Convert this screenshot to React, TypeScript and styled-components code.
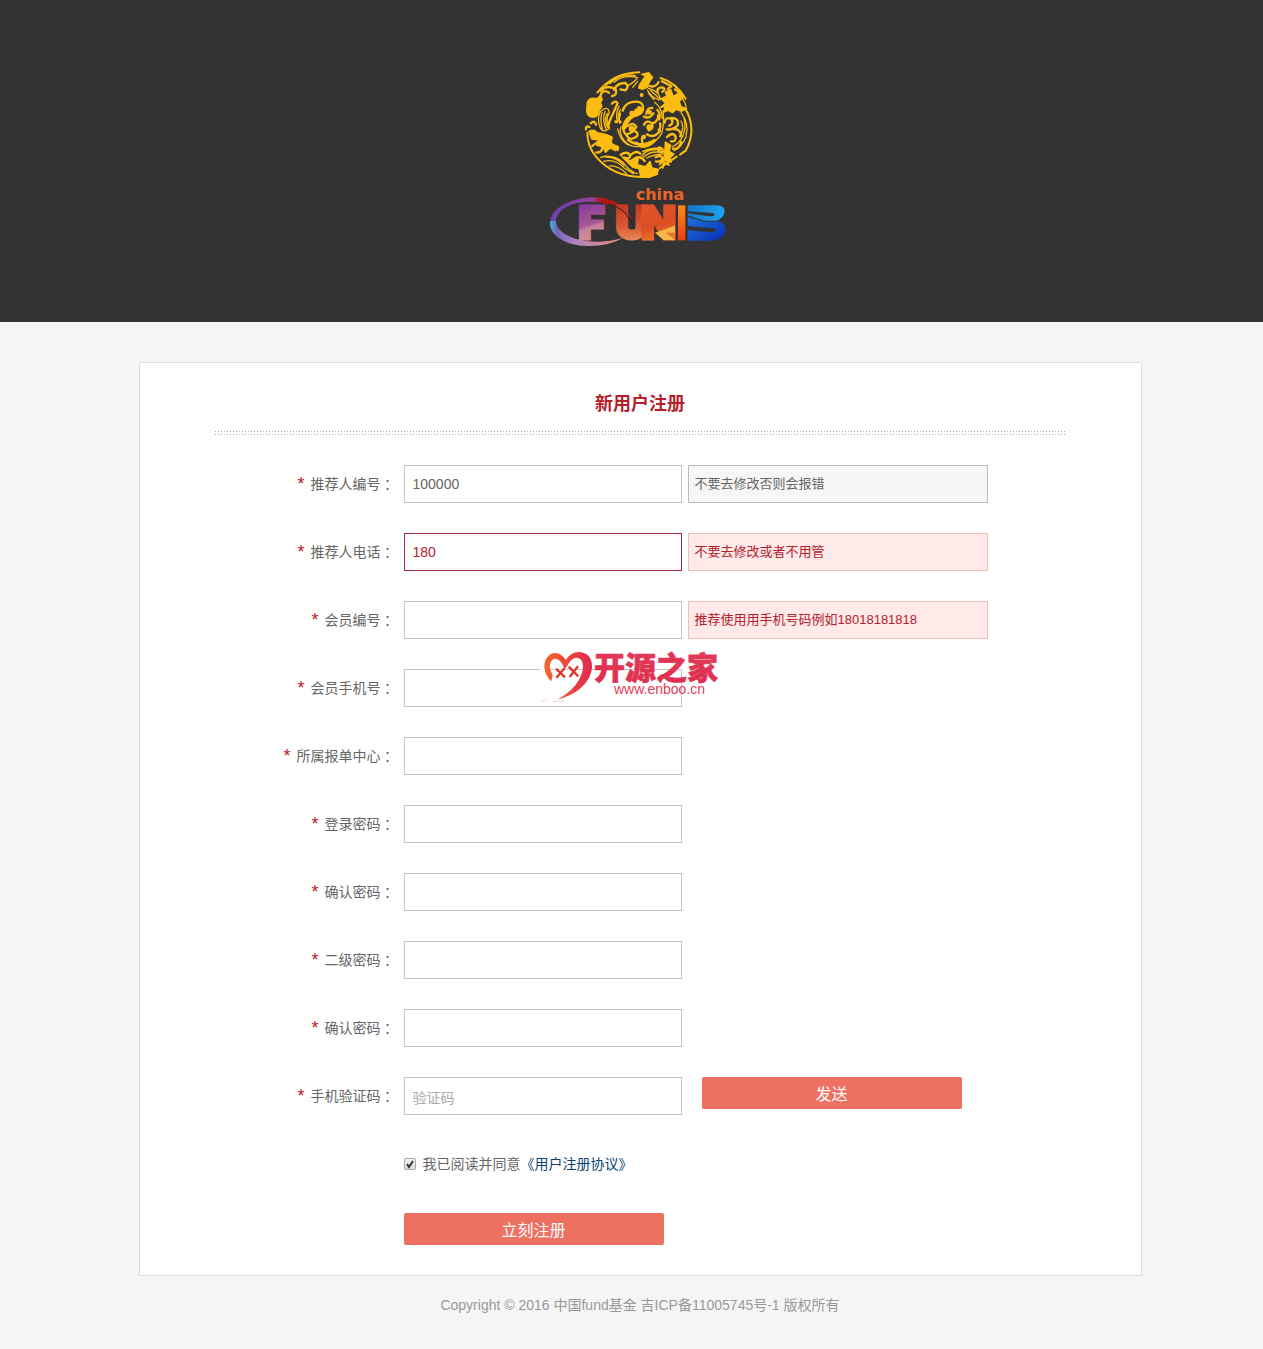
import React, { useState } from "react";
import styled, { createGlobalStyle, css } from "styled-components";

const GlobalStyle = createGlobalStyle`
  *, *::before, *::after { box-sizing: border-box; }
  body {
    margin: 0;
    background: #f5f5f5;
    color: #666;
    font: 14px/20px "Liberation Sans", "Noto Sans CJK SC", sans-serif;
  }
  input, button { font-family: inherit; }
`;

const Header = styled.header`
  display: flex;
  justify-content: center;
  height: 322px;
  padding: 60px 0 0 17px;
  background: #333;
`;

const Page = styled.div`
  padding: 40px 0 34px 17px;
`;

const Card = styled.main`
  position: relative;
  max-width: 1003px;
  margin: 0 auto;
  padding: 31px 75px 30px;
  background: #fff;
  border: 1px solid #ddd;
`;

const Title = styled.h1`
  margin: 0;
  font-size: 18px;
  line-height: 20px;
  font-weight: 700;
  text-align: center;
  color: #b5202a;
`;

const Divider = styled.hr`
  height: 4px;
  margin: 17px 0 30px;
  border: 0;
  background: conic-gradient(from 270deg at 1px 1px, #aaa 90deg, transparent 0) 0 0 / 3px 3px;
`;

const Form = styled.form`
  display: flex;
  flex-direction: column;
  gap: 30px;
`;

const Row = styled.div`
  display: grid;
  grid-template-columns: 180px 278px auto;
  grid-auto-rows: 38px;
  column-gap: 9px;
`;

const Label = styled.label`
  display: flex;
  align-items: center;
  justify-content: flex-end;
  line-height: 20px;
  white-space: nowrap;
`;

const Star = styled.span`
  margin-right: 6px;
  font-size: 18px;
  color: #b5202a;
`;

const Colon = styled.span`
  font-family: "Noto Sans CJK TC", sans-serif;
`;

const Input = styled.input<{ $error?: boolean }>`
  width: 278px;
  height: 38px;
  padding: 0 8px;
  border: 1px solid #c4c4c4;
  border-radius: 0;
  outline: 0;
  background: #fff;
  font-size: 14px;
  color: #666;
  &::placeholder { color: #a9a9a9; }
  &:placeholder-shown[placeholder] { padding-top: 4px; }
  ${(p) => p.$error && css`
    border-color: #a82c40;
    color: #b5202a;
  `}
`;

const Hint = styled.p<{ $error?: boolean }>`
  width: 300px;
  height: 38px;
  margin: 0 0 0 -3px;
  padding: 0 6px;
  border: 1px solid #bbb;
  background: #f6f6f6;
  font-size: 13px;
  line-height: 36px;
  ${(p) => p.$error && css`
    border-color: #f5bcbf;
    background: #ffe9e9;
    color: #b5202a;
  `}
`;

const Button = styled.button`
  width: 260px;
  height: 32px;
  padding: 4px 0 0;
  border: 0;
  border-radius: 2px;
  background: #ed7061;
  color: #fff;
  font-size: 16px;
  line-height: 20px;
  cursor: pointer;
`;

const SendButton = styled(Button)`
  margin-left: 11px;
`;

const Offset = styled.div`
  display: flex;
  align-items: center;
  min-height: 38px;
  padding-left: 189px;
`;

const SubmitRow = styled.div`
  display: flex;
  padding-left: 189px;
`;

const Agree = styled.label`
  display: flex;
  align-items: center;
`;

const TickWrap = styled.span`
  position: relative;
  display: flex;
  margin-right: 7px;
`;

const Tick = styled.input`
  appearance: none;
  width: 12px;
  height: 12px;
  margin: 0;
  border: 1px solid #aaa;
  border-radius: 2px;
  background: linear-gradient(#f2f2f2, #ddd);
  & + svg { display: none; }
  &:checked + svg { display: block; }
`;

const TickMark = styled.svg`
  position: absolute;
  inset: 0;
  pointer-events: none;
`;

const Link = styled.a`
  color: #0a4170;
  text-decoration: none;
`;

const Footer = styled.footer`
  padding-top: 19px;
  text-align: center;
  color: #999;
`;

const Watermark = styled.div`
  position: absolute;
  left: 390px;
  top: 277px;
  pointer-events: none;
  svg { display: block; }
`;

const Logo = () => (
  <svg width="200" height="195" viewBox="0 0 600 585" role="img" aria-label="china fund">
    <defs>
      <linearGradient id="ring" x1="0" x2="1">
        <stop offset="0" stopColor="#6a3fb0" />
        <stop offset=".5" stopColor="#93429c" />
        <stop offset=".62" stopColor="#b01418" />
        <stop offset="1" stopColor="#b01c18" />
      </linearGradient>
      <linearGradient id="ringLow" x1="0" x2="1">
        <stop offset="0" stopColor="#35b5dc" />
        <stop offset=".1" stopColor="#7a62bd" />
        <stop offset=".35" stopColor="#b384bd" />
        <stop offset="1" stopColor="#e58b78" />
      </linearGradient>
      <linearGradient id="f" gradientUnits="userSpaceOnUse" x1="130" y1="76" x2="165" y2="182">
        <stop offset="0" stopColor="#8b3c9c" />
        <stop offset=".55" stopColor="#aa5796" />
        <stop offset=".62" stopColor="#c4809f" />
        <stop offset="1" stopColor="#d8938f" />
      </linearGradient>
      <linearGradient id="u" gradientUnits="userSpaceOnUse" x1="0" y1="76" x2="0" y2="182">
        <stop offset="0" stopColor="#c53a22" />
        <stop offset=".6" stopColor="#da5933" />
        <stop offset="1" stopColor="#e98a5a" />
      </linearGradient>
      <linearGradient id="n" gradientUnits="userSpaceOnUse" x1="320" y1="76" x2="350" y2="182">
        <stop offset="0" stopColor="#e3542c" />
        <stop offset=".6" stopColor="#dd4c23" />
        <stop offset="1" stopColor="#ec7a2c" />
      </linearGradient>
      <linearGradient id="bar" x1="0" y1="0" x2="0" y2="1">
        <stop offset="0" stopColor="#f98a17" />
        <stop offset="1" stopColor="#f13d14" />
      </linearGradient>
      <linearGradient id="b1" x1="0" y1="0" x2="1" y2="0">
        <stop offset="0" stopColor="#1376c8" />
        <stop offset="1" stopColor="#1ea2ee" />
      </linearGradient>
      <linearGradient id="b2" x1="0" y1="0" x2="1" y2="1">
        <stop offset="0" stopColor="#1b74da" />
        <stop offset="1" stopColor="#0b2cb4" />
      </linearGradient>
    </defs>

    <g transform="translate(90 0)" fill="none" stroke="#fcbd10" strokeLinecap="round" strokeLinejoin="round">
      <g strokeWidth="6">
        <path d="M82 98Q130 38 208 37M272 54Q318 68 347 116M346 146Q382 208 347 272L330 284M52 218Q52 258 78 290Q128 350 214 351L262 342M270 324L320 290" />
      </g>
      <g fill="#fcbd10" strokeWidth="4">
        <path d="M52 126Q60 110 80 116L92 106L97 119L91 128L96 139Q86 150 84 162Q80 174 64 171Q50 168 50 150Z" />
        <path d="M208 75L226 48L215 43L236 38L248 52L238 66L232 82L217 88L206 84Z" />
        <path d="M274 116L290 108L286 96L302 88L310 110L330 96L340 112L328 124L333 140L350 145L334 154L318 148L308 158L294 151L280 157L286 140L272 142L286 130Z" />
        <path d="M57 214Q72 206 82 218L108 223L126 232L124 250L146 262L136 272L120 264L107 277L98 260L80 256L86 240L65 237Z" />
        <path d="M156 290L180 302L205 294L202 314L226 320L240 304L246 324L266 328L258 344L238 352L212 351L207 326L188 322Z" />
        <path d="M286 246L302 256L298 274L312 282L300 294L304 306L284 302L268 314L284 286Z" />
        <path d="M158 200Q166 168 196 160L205 140Q216 140 216 152Q212 168 192 170Q174 180 170 200L160 212Z" />
        <path d="M196 246Q224 262 256 240Q244 262 214 262Z" />
        <circle cx="215" cy="105" r="4" /><circle cx="138" cy="185" r="3" />
        <circle cx="186" cy="160" r="6" /><circle cx="185" cy="206" r="7" />
        <circle cx="238" cy="202" r="7" /><circle cx="221" cy="231" r="5" />
        <circle cx="239" cy="157" r="5" />
      </g>
      <g strokeWidth="7">
        <path d="M158 152Q166 124 202 125Q222 128 219 148Q216 164 200 163Q190 157 198 149M200 163Q170 170 161 198Q158 214 168 224Q190 218 199 200Q188 184 174 198M170 226Q179 246 202 228Q205 216 194 214M229 162Q232 142 247 144M250 160Q238 178 222 170M222 194Q230 178 246 190Q252 208 236 211M247 191Q268 181 264 166M231 223Q250 237 270 213M174 240Q210 266 254 240M220 257Q210 231 223 228" />
        <path d="M91 92Q111 72 137 88Q143 106 126 108M132 89Q142 68 166 69Q179 80 166 91L151 88M117 98Q97 86 92 106" />
        <path d="M238 78Q256 84 266 66M263 98Q258 82 277 82Q290 87 277 95M276 64L304 79L294 86M315 88L326 96" />
        <path d="M284 188Q286 169 304 177Q313 190 298 197M304 174Q328 174 323 196Q310 211 290 208M309 207Q333 206 333 228M291 231Q310 213 317 231Q319 246 303 244M333 246Q328 270 309 266" />
        <path d="M67 258Q84 240 97 260Q97 280 79 277M81 247Q109 247 109 267M102 236Q111 222 125 233M135 263Q147 254 143 270" />
        <path d="M152 284Q173 271 181 287Q178 299 165 293M184 283Q199 270 211 281M184 304Q207 280 224 303M277 267Q262 254 266 274Q281 282 291 263M257 292Q274 283 278 296Q271 308 258 304M278 323Q279 301 296 314" />
        <path d="M48 208Q46 196 58 201M62 190Q75 179 78 194M126 131Q136 119 143 130L128 163Q118 180 114 201M150 160L146 180L152 186M262 150Q272 160 268 178M270 190Q274 202 266 210" />
      </g>
      <g strokeWidth="4">
        <path d="M119 71Q153 38 196 47M132 67Q160 43 203 53M174 77Q193 66 200 57M188 82L203 65M108 76Q130 56 151 48" />
        <path d="M235 85Q266 91 272 119M232 90Q243 111 267 120M242 92Q258 104 269 117M235 99L252 119" />
        <path d="M91 155Q114 134 118 158Q104 180 119 205Q98 222 90 202Q80 177 91 155M96 157Q89 180 97 207M105 154Q96 179 108 208M112 160Q101 180 112 201" />
        <path d="M333 158Q358 189 348 230Q335 261 312 272M341 169Q350 202 338 229Q325 253 307 260M333 183Q345 201 329 230M336 145Q350 147 356 164M328 107Q345 120 348 140" />
        <path d="M92 292Q127 281 159 307Q178 334 202 341M101 304Q135 295 163 324L190 341M119 318Q143 315 170 341M107 291Q138 290 162 316" />
        <path d="M216 288Q229 263 281 270M221 291Q241 272 273 277M230 294Q250 283 281 282M218 275Q241 263 272 264" />
        <path d="M147 139Q136 159 142 188M151 149Q140 167 149 190M153 201Q145 218 163 242Q184 266 211 258M143 207Q149 240 174 255M279 152Q284 188 275 220Q258 250 223 261M254 127Q275 143 277 175" />
      </g>
    </g>

    <g transform="translate(0 360)">
      <path d="M30 129C31 75 120 43 193 54Q254 68 280 124Q244 79 177 67C103 58 46 87 48 129Z" fill="url(#ring)" />
      <path d="M30 123H48C47 170 150 204 250 173Q207 199 143 198C76 197 25 166 30 123Z" fill="url(#ringLow)" />
      <text y="178" fontFamily="Inter, sans-serif" fontSize="136" fontWeight="900" strokeWidth="9">
        <tspan x="115" fill="url(#f)" stroke="url(#f)">F</tspan>
        <tspan x="226" fill="url(#u)" stroke="url(#u)">U</tspan>
        <tspan x="303" fill="url(#n)" stroke="url(#n)">N</tspan>
      </text>
      <path d="M345 158L405 137V158L378 158L405 180H370Z" fill="#f7b447" />
      <path d="M205 72Q262 82 284 148" fill="none" stroke="#222" strokeWidth="3" />
      <rect x="414" y="76" width="22" height="105" fill="url(#bar)" />
      <path d="M443 76H526C550 76 556 86 553 98Q550 114 530 122H492L443 106V99L500 108Q522 110 524 104Q522 98 508 98L443 94Z" fill="url(#b1)" />
      <path d="M443 110L491 125H538Q562 134 556 156Q548 182 510 182H443V150L500 156Q526 158 529 151Q526 144 508 144L443 138Z" fill="url(#b2)" />
      <text x="287" y="59" fill="#ec6228" fontFamily="DejaVu Sans, sans-serif" fontSize="48" fontWeight="700">china</text>
    </g>
  </svg>
);

const Stamp = () => (
  <svg width="200" height="75" viewBox="0 0 600 225" role="img" aria-label="开源之家 www.enboo.cn">
    <defs>
      <linearGradient id="heart" x1="0" x2="1">
        <stop offset="0" stopColor="#f6652c" />
        <stop offset="1" stopColor="#e2294f" />
      </linearGradient>
      <linearGradient id="brand" x1="0" y1="0" x2="0" y2="1">
        <stop offset="0" stopColor="#e63a5d" />
        <stop offset="1" stopColor="#dc2f4d" />
      </linearGradient>
    </defs>
    <path d="M30 70H52L65 120L98 140V186H30Z" fill="#fff" />
    <path d="M64 124C38 100 36 60 61 43Q86 30 108 60Q123 34 151 36Q187 42 186 82C183 126 140 166 84 178Q147 142 158 90Q162 60 145 54Q126 50 112 77L104 87Q89 50 69 58Q50 72 68 106Z" fill="url(#heart)" />
    <path d="M78 86L105 112M104 84L79 113M116 80L145 109M144 79L119 111" stroke="#df382f" strokeWidth="7" />
    <path d="M34 182H50M68 184H101" stroke="#f7c5c7" strokeWidth="3" strokeDasharray="9 3" />
    <text x="192" y="117" fill="url(#brand)" stroke="url(#brand)" strokeWidth="2" fontFamily="Noto Sans CJK SC, sans-serif" fontSize="93" fontWeight="900">开源之家</text>
    <text x="252" y="161" fill="#e0405a" fontFamily="Liberation Sans, sans-serif" fontSize="42">www.enboo.cn</text>
  </svg>
);

type Field = {
  id: string;
  label: string;
  type?: string;
  value?: string;
  placeholder?: string;
  hint?: string;
  inputError?: boolean;
  hintError?: boolean;
  send?: boolean;
};

const fields: Field[] = [
  { id: "referrer", label: "推荐人编号", value: "100000", hint: "不要去修改否则会报错" },
  { id: "referrerPhone", label: "推荐人电话", value: "180", hint: "不要去修改或者不用管", inputError: true, hintError: true },
  { id: "member", label: "会员编号", hint: "推荐使用用手机号码例如18018181818", hintError: true },
  { id: "memberPhone", label: "会员手机号", type: "tel" },
  { id: "center", label: "所属报单中心" },
  { id: "password", label: "登录密码", type: "password" },
  { id: "passwordConfirm", label: "确认密码", type: "password" },
  { id: "password2", label: "二级密码", type: "password" },
  { id: "password2Confirm", label: "确认密码", type: "password" },
  { id: "code", label: "手机验证码", placeholder: "验证码", send: true },
];

export default function App() {
  const [agreed, setAgreed] = useState(true);
  return (
    <>
      <GlobalStyle />
      <Header><Logo /></Header>
      <Page>
        <Card>
          <Title>新用户注册</Title>
          <Divider />
          <Form onSubmit={(e) => e.preventDefault()}>
            {fields.map((f) => (
              <Row key={f.id}>
                <Label htmlFor={f.id}><Star>*</Star>{f.label}<Colon>：</Colon></Label>
                <Input id={f.id} type={f.type ?? "text"} defaultValue={f.value} placeholder={f.placeholder} $error={f.inputError} />
                {f.hint && <Hint $error={f.hintError}>{f.hint}</Hint>}
                {f.send && <SendButton type="button">发送</SendButton>}
              </Row>
            ))}
            <Offset>
              <Agree>
                <TickWrap>
                  <Tick type="checkbox" checked={agreed} onChange={(e) => setAgreed(e.target.checked)} />
                  <TickMark width="12" height="12" viewBox="0 0 12 12">
                    <path d="M3 6L5 9L9 3" fill="none" stroke="#333" strokeWidth="2" />
                  </TickMark>
                </TickWrap>
                我已阅读并同意
              </Agree>
              <Link href="#agreement">《用户注册协议》</Link>
            </Offset>
            <SubmitRow><Button type="submit">立刻注册</Button></SubmitRow>
          </Form>
          <Watermark><Stamp /></Watermark>
        </Card>
        <Footer>Copyright © 2016 中国fund基金 吉ICP备11005745号-1 版权所有</Footer>
      </Page>
    </>
  );
}
